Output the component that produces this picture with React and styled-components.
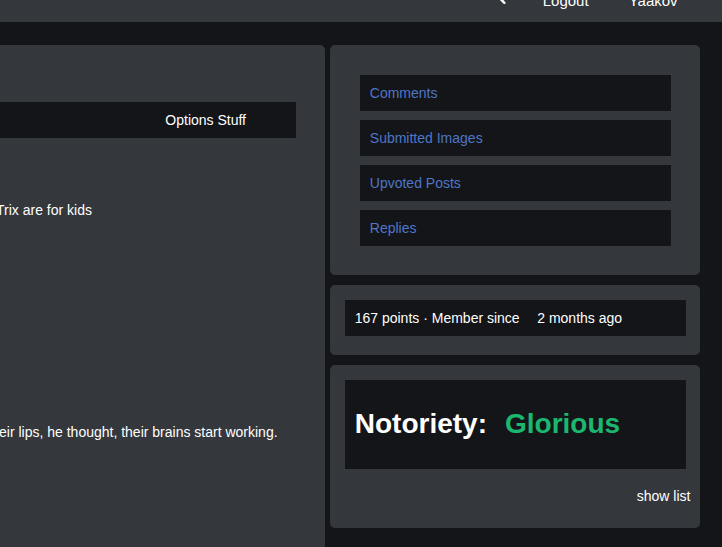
import React from "react";
import styled, { createGlobalStyle } from "styled-components";

const GlobalStyle = createGlobalStyle`
  * { box-sizing: border-box; }
  body {
    margin: 0;
    background: #141518;
    color: #fff;
    font: 14px/16px "Liberation Sans", Arial, sans-serif;
    overflow: hidden;
  }
`;

const Page = styled.div`
  height: 547px;
  overflow: hidden;
`;

const TopBar = styled.header`
  display: flex;
  justify-content: flex-end;
  align-items: flex-end;
  height: 22px;
  padding: 0 44.3px 13px 0;
  background: #34373c;
  font-size: 15px;
  line-height: 17px;
`;

const SearchIcon = styled.svg`
  flex: none;
  width: 16px;
  height: 16px;
  margin: 0 35.7px -4px 0;
`;

const NavItem = styled.span`
  flex: none;
  width: ${(p) => p.$width}px;
  white-space: nowrap;
`;

const Columns = styled.main`
  display: grid;
  grid-template-columns: 325px 370px;
  gap: 5px;
  margin-top: 23px;
`;

const Profile = styled.section`
  height: 502px;
  padding-top: 57px;
  background: #34373c;
  border-top-right-radius: 5px;
`;

const Options = styled.div`
  display: flex;
  justify-content: flex-end;
  align-items: center;
  width: 296px;
  height: 36px;
  padding-right: 50px;
  background: #141518;
`;

const Quote = styled.p`
  display: flex;
  justify-content: flex-end;
  width: ${(p) => p.$width}px;
  margin: ${(p) => p.$top}px 0 0;
  white-space: nowrap;
`;

const Sidebar = styled.aside`
  display: flex;
  flex-direction: column;
  gap: 10px;
`;

const Card = styled.section`
  height: ${(p) => p.$height}px;
  padding: ${(p) => p.$padding};
  background: #34373c;
  border-radius: 5px;
`;

const LinkList = styled.nav`
  display: grid;
  gap: 9px;
`;

const LinkRow = styled.a`
  height: 36px;
  padding: 10px 9.8px;
  background: #141518;
  color: #4e76c9;
`;

const Stats = styled.div`
  display: flex;
  gap: 17.6px;
  height: 36px;
  padding: 10px 9.7px;
  background: #141518;
  white-space: nowrap;
`;

const Notoriety = styled.h1`
  display: flex;
  align-items: center;
  gap: 18px;
  height: 89px;
  margin: 0;
  padding: 0 9.8px 2px;
  background: #141518;
  font-size: 28px;
  line-height: 32px;
`;

const Rank = styled.span`
  color: #1bb76e;
`;

const ShowList = styled.div`
  margin: 19px -4.4px 0 0;
  text-align: right;
`;

const links = ["Comments", "Submitted Images", "Upvoted Posts", "Replies"];

export default function App() {
  return (
    <Page>
      <GlobalStyle />
      <TopBar>
        <SearchIcon viewBox="0 0 16 16" fill="none" stroke="#fff">
          <circle cx="5" cy="-4.2" r="4.5" strokeWidth="2" />
          <path d="M8 0.4L13.4 5.8" strokeWidth="2.4" strokeLinecap="round" />
        </SearchIcon>
        <NavItem $width={86}>Logout</NavItem>
        <NavItem $width={49}>Yaakov</NavItem>
      </TopBar>
      <Columns>
        <Profile>
          <Options>Options Stuff</Options>
          <Quote $width={92} $top={64}>Trix are for kids</Quote>
          <Quote $width={277.6} $top={206}>
            their lips, he thought, their brains start working.
          </Quote>
        </Profile>
        <Sidebar>
          <Card $height={230} $padding="30px 29px 0 30px">
            <LinkList>
              {links.map((label) => (
                <LinkRow key={label}>{label}</LinkRow>
              ))}
            </LinkList>
          </Card>
          <Card $height={70} $padding="15px 14px 0 15px">
            <Stats>
              <span>167 points · Member since</span>
              <span>2 months ago</span>
            </Stats>
          </Card>
          <Card $height={163} $padding="15px 14px 0 15px">
            <Notoriety>
              <span>Notoriety:</span>
              <Rank>Glorious</Rank>
            </Notoriety>
            <ShowList>show list</ShowList>
          </Card>
        </Sidebar>
      </Columns>
    </Page>
  );
}
